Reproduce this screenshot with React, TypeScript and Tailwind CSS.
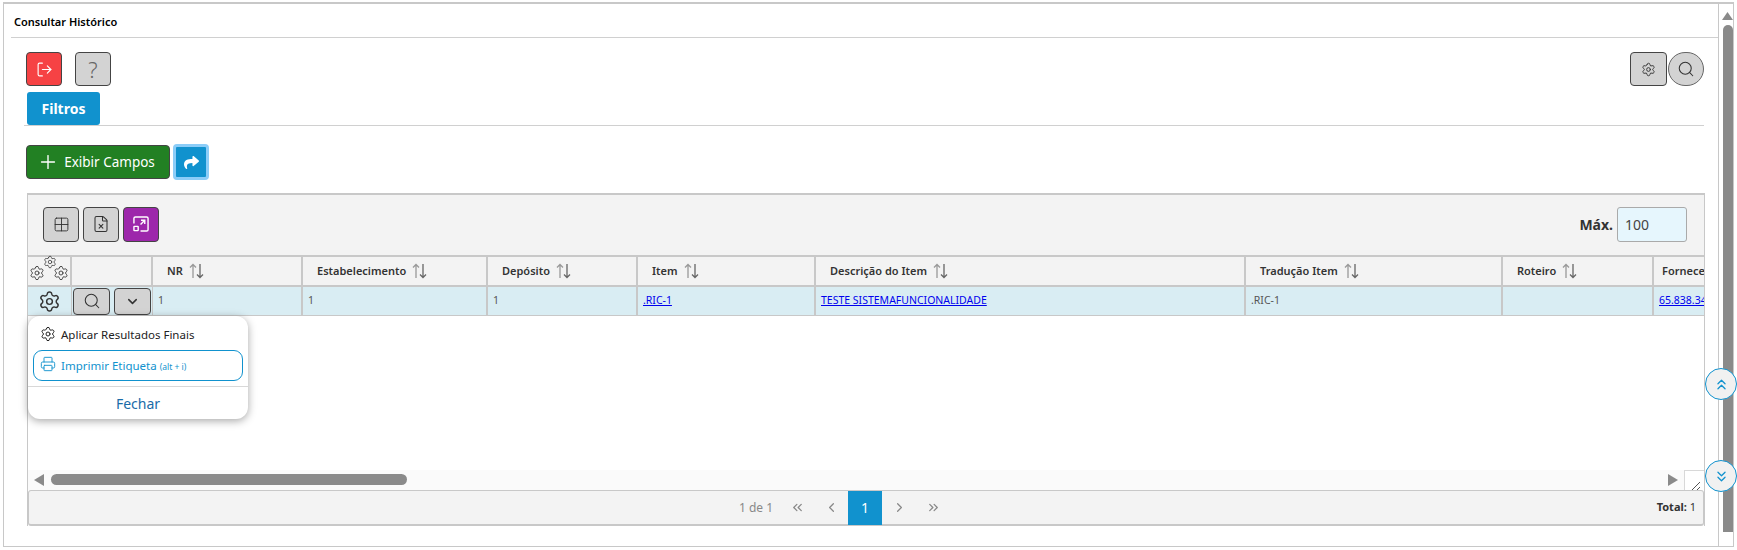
import { ChevronDown, ChevronLeft, ChevronRight, ChevronsDown, ChevronsLeft, ChevronsRight, ChevronsUp, FileX, Grid2x2, LogOut, Plus, Printer, Search, Settings } from "lucide-react";
import { FaShare } from "react-icons/fa";

function SortIcon() {
  return (
    <svg width="15" height="16" viewBox="0 0 15 16" fill="none" strokeWidth="1.3" className="shrink-0">
      <path d="M4 15V1.5M1 4.5l3-3 3 3" stroke="#999" />
      <path d="M11 1v13.5M8 11.5l3 3 3-3" stroke="#666" />
    </svg>
  );
}

const columns = [
  { label: "NR", width: "w-[150px]" },
  { label: "Estabelecimento", width: "w-[185px]" },
  { label: "Depósito", width: "w-[150px]" },
  { label: "Item", width: "w-[178px]" },
  { label: "Descrição do Item", width: "w-[430px]" },
  { label: "Tradução Item", width: "w-[257px]" },
  { label: "Roteiro", width: "w-[151px]" },
];

const cells = [
  { text: "1", width: "w-[150px]" },
  { text: "1", width: "w-[185px]" },
  { text: "1", width: "w-[150px]" },
  { text: ".RIC-1", width: "w-[178px]", link: true },
  { text: "TESTE SISTEMAFUNCIONALIDADE", width: "w-[430px]", link: true },
  { text: ".RIC-1", width: "w-[257px]" },
  { text: "", width: "w-[151px]" },
];

function GrayBtn({ children, className }: { children: React.ReactNode; className?: string }) {
  return (
    <button className={"flex items-center justify-center rounded-[4px] border border-[#444] bg-[#d3d3d3] text-[#333] " + (className ?? "")}>
      {children}
    </button>
  );
}

export default function App() {
  return (
    <div className="relative h-[550px] w-[1737px] overflow-hidden bg-white font-['Noto_Sans','Open_Sans',sans-serif] text-[#333]">
      <div className="ml-[3px] mt-[2px] flex h-[545px] w-[1731px] border-x border-b border-t-2 border-[#c8c8c8]">
        <div className="w-[1714px] shrink-0">
          <div className="ml-[7px] flex h-[34px] items-center border-b border-[#d0d0d0] pl-[3px] pt-[3px] text-[11px] font-semibold text-black">
            Consultar Histórico
          </div>
          <div className="pl-[22px] pr-[14px] pt-[14px]">
            <div className="flex items-center justify-between">
              <div className="flex gap-[13px]">
                <button className="flex h-[34px] w-[36px] items-center justify-center rounded-[4px] border border-[#444] bg-[#f64244] text-white">
                  <LogOut size={17} strokeWidth={1.6} />
                </button>
                <GrayBtn className="h-[34px] w-[36px] text-[22px] font-light text-[#666]">?</GrayBtn>
              </div>
              <div className="flex items-center">
                <GrayBtn className="h-[34px] w-[37px]">
                  <Settings size={15} strokeWidth={1.5} />
                </GrayBtn>
                <button className="ml-px flex h-[34px] w-[36px] items-center justify-center rounded-full border border-[#666] bg-[#d3d3d3]">
                  <Search size={18} strokeWidth={1.4} />
                </button>
              </div>
            </div>
            <div className="ml-[-2px] mt-[6px] border-b border-[#d0d0d0]">
              <div className="ml-[3px] flex h-[33px] w-[73px] items-center justify-center rounded-[3px] bg-[#1192ce] text-[14px] font-bold text-white">
                Filtros
              </div>
            </div>
            <div className="mt-[18px] flex items-center gap-[3px]">
              <button className="flex h-[34px] w-[144px] items-center justify-center gap-[5px] rounded-[4px] border border-[#444] bg-[#228023] pr-[4px] text-[13.5px] text-white">
                <Plus size={22} strokeWidth={1.5} />
                Exibir Campos
              </button>
              <button className="flex h-[36px] w-[36px] items-center justify-center rounded-[4px] border-[3px] border-[#8ccdf8] bg-[#1192ce] text-white">
                <FaShare size={15} />
              </button>
            </div>

            <div className="relative ml-[1px] mt-[13px] w-[1678px] border-x border-t-2 border-[#c8c8c8]">
              <div className="flex h-[60px] items-center justify-between bg-[#f3f3f3] pb-[2px] pl-[15px] pr-[17px]">
                <div className="flex gap-[4px]">
                  <GrayBtn className="h-[35px] w-[36px]">
                    <Grid2x2 size={17} strokeWidth={1.3} />
                  </GrayBtn>
                  <GrayBtn className="h-[35px] w-[36px]">
                    <FileX size={18} strokeWidth={1.4} />
                  </GrayBtn>
                  <button className="flex h-[35px] w-[36px] items-center justify-center rounded-[4px] border border-[#444] bg-[#9d27ab] text-white">
                    <svg width="16" height="16" viewBox="0 0 17 17" fill="none" stroke="currentColor" strokeWidth="1.5">
                      <path d="M1 8V2.500A1.500 1.500 0 0 1 2.500 1h12A1.500 1.500 0 0 1 16 2.500v12a1.500 1.500 0 0 1-1.500 1.500H8" />
                      <rect x="1" y="11" width="4.500" height="4.500" rx="0.500" />
                      <path d="M8 9l4.500-4.500M8.500 4.500H12.500V8.500" />
                    </svg>
                  </button>
                </div>
                <div className="flex items-center gap-[4px]">
                  <span className="text-[14px] font-bold">Máx.</span>
                  <div className="flex h-[35px] w-[70px] items-center rounded-[3px] border border-[#aaa] bg-[#e6f6fd] pl-[7px] text-[14px] text-[#444]">
                    100
                  </div>
                </div>
              </div>

              <div className="overflow-hidden">
                <div className="flex h-[32px] w-[1800px] border-y-2 border-[#c8c8c8] bg-[#f3f3f3] text-[11px] font-semibold">
                  <div className="relative w-[44px] shrink-0 border-r-2 border-[#c8c8c8]">
                    <Settings size={16} strokeWidth={1.3} className="absolute left-[1px] top-[8px]" />
                    <Settings size={14} strokeWidth={1.3} className="absolute left-[15px] top-[-2px]" />
                    <Settings size={16} strokeWidth={1.3} className="absolute left-[25px] top-[8px]" />
                  </div>
                  <div className="w-[81px] shrink-0 border-r-2 border-[#c8c8c8]" />
                  {columns.map((c) => (
                    <div key={c.label} className={"flex shrink-0 items-center gap-[6px] border-r-2 border-[#c8c8c8] pl-[14px] " + c.width}>
                      {c.label}
                      <SortIcon />
                    </div>
                  ))}
                  <div className="flex items-center pl-[8px]">Fornecedor</div>
                </div>
                <div className="flex h-[29px] w-[1800px] border-b border-[#c8c8c8] bg-[#d9edf3] text-[10.500px] text-[#555]">
                  <div className="flex w-[44px] shrink-0 items-center justify-center border-r border-[#c8c8c8]">
                    <Settings size={23} strokeWidth={1.5} className="text-[#333]" />
                  </div>
                  <div className="flex w-[81px] shrink-0 items-center gap-[4px] border-r border-[#c8c8c8] pl-[1px]">
                    <GrayBtn className="h-[27px] w-[37px]">
                      <Search size={18} strokeWidth={1.4} />
                    </GrayBtn>
                    <GrayBtn className="h-[27px] w-[37px]">
                      <ChevronDown size={15} strokeWidth={2.4} />
                    </GrayBtn>
                  </div>
                  {cells.map((c, i) => (
                    <div key={i} className={"flex shrink-0 items-center border-r-2 border-[#c8c8c8] pl-[5px] " + c.width}>
                      {c.link ? <a className="cursor-pointer text-[#0000ee] underline">{c.text}</a> : c.text}
                    </div>
                  ))}
                  <div className="flex items-center pl-[5px]">
                    <a className="cursor-pointer text-[#0000ee] underline">65.838.344/0001</a>
                  </div>
                </div>
              </div>

              <div className="h-[154px]" />

              <div className="flex h-[20px] items-start bg-[#fafafa]">
                <svg width="10" height="12" viewBox="0 0 10 12" className="ml-[6px] mt-[4px] shrink-0 fill-[#8a8a8a]">
                  <path d="M10 0v12L0 6z" />
                </svg>
                <div className="ml-[7px] mt-[4px] h-[11px] w-[356px] rounded-full bg-[#8a8a8a]" />
                <svg width="10" height="12" viewBox="0 0 10 12" className="ml-[1261px] mt-[4px] shrink-0 fill-[#8a8a8a]">
                  <path d="M0 0v12l10-6z" />
                </svg>
                <div className="relative ml-[6px] h-[20px] flex-1 border-l border-t border-[#d8d8d8] bg-white">
                  <svg width="12" height="10" viewBox="0 0 12 10" className="absolute bottom-0 right-[2px] stroke-[#555]" fill="none">
                    <path d="M2 10L10 2M7 10l3-3" />
                  </svg>
                </div>
              </div>

              <div className="relative flex h-[36px] items-center justify-center rounded-[3px] border border-b-2 border-[#c8c8c8] bg-[#f3f3f3] pr-[43px] text-[12px] text-[#888]">
                <div className="flex items-center">
                  <span className="mr-[7px]">1 de 1</span>
                  <span className="flex h-[34px] w-[34px] items-center justify-center"><ChevronsLeft size={15} /></span>
                  <span className="flex h-[34px] w-[34px] items-center justify-center"><ChevronLeft size={15} /></span>
                  <span className="flex h-[34px] w-[34px] items-center justify-center bg-[#1192ce] text-[14px] text-white">1</span>
                  <span className="flex h-[34px] w-[34px] items-center justify-center"><ChevronRight size={15} /></span>
                  <span className="flex h-[34px] w-[34px] items-center justify-center"><ChevronsRight size={15} /></span>
                </div>
                <div className="absolute right-[7px] text-[11px] text-[#333]">
                  <span className="font-bold">Total:</span> 1
                </div>
              </div>

              <div className="absolute left-0 top-[121px] w-[220px] rounded-[12px] bg-white text-[11.500px] shadow-[0_2px_8px_rgba(0,0,0,0.35)]">
                <div className="flex h-[34px] items-center gap-[5px] pl-[12px] pt-[4px] text-[#222]">
                  <Settings size={16} strokeWidth={1.5} className="-mt-[3px]" />
                  Aplicar Resultados Finais
                </div>
                <div className="mx-[5px] flex h-[31px] items-center gap-[5px] rounded-[9px] border border-[#1192ce] pl-[6px] text-[#1192ce]">
                  <Printer size={16} strokeWidth={1.4} className="-mt-[3px]" />
                  <span>Imprimir Etiqueta <span className="text-[8.500px]">(alt + i)</span></span>
                </div>
                <div className="mt-[5px] flex h-[33px] items-center justify-center border-t border-[#d8d8d8] text-[14px] text-[#1a6ba8]">
                  Fechar
                </div>
              </div>
            </div>
          </div>
        </div>

        <div className="relative w-[15px] shrink-0 border-l border-[#c8c8c8]">
          <svg width="11" height="8" viewBox="0 0 11 8" className="ml-[3px] mt-[8px] fill-[#8a8a8a]">
            <path d="M0 8h11L5.500 0z" />
          </svg>
          <div className="ml-[4px] mt-[5px] h-[507px] w-[10px] rounded-t-full bg-[#8a8a8a]" />
        </div>
      </div>

      <div className="absolute left-[1705px] top-[368px] flex h-[32px] w-[32px] items-center justify-center rounded-full border border-[#1192ce] bg-[#f1f1f1] text-[#1192ce]">
        <ChevronsUp size={17} strokeWidth={1.8} />
      </div>
      <div className="absolute left-[1705px] top-[460px] flex h-[32px] w-[32px] items-center justify-center rounded-full border border-[#1192ce] bg-[#f1f1f1] text-[#1192ce]">
        <ChevronsDown size={17} strokeWidth={1.8} />
      </div>
    </div>
  );
}
